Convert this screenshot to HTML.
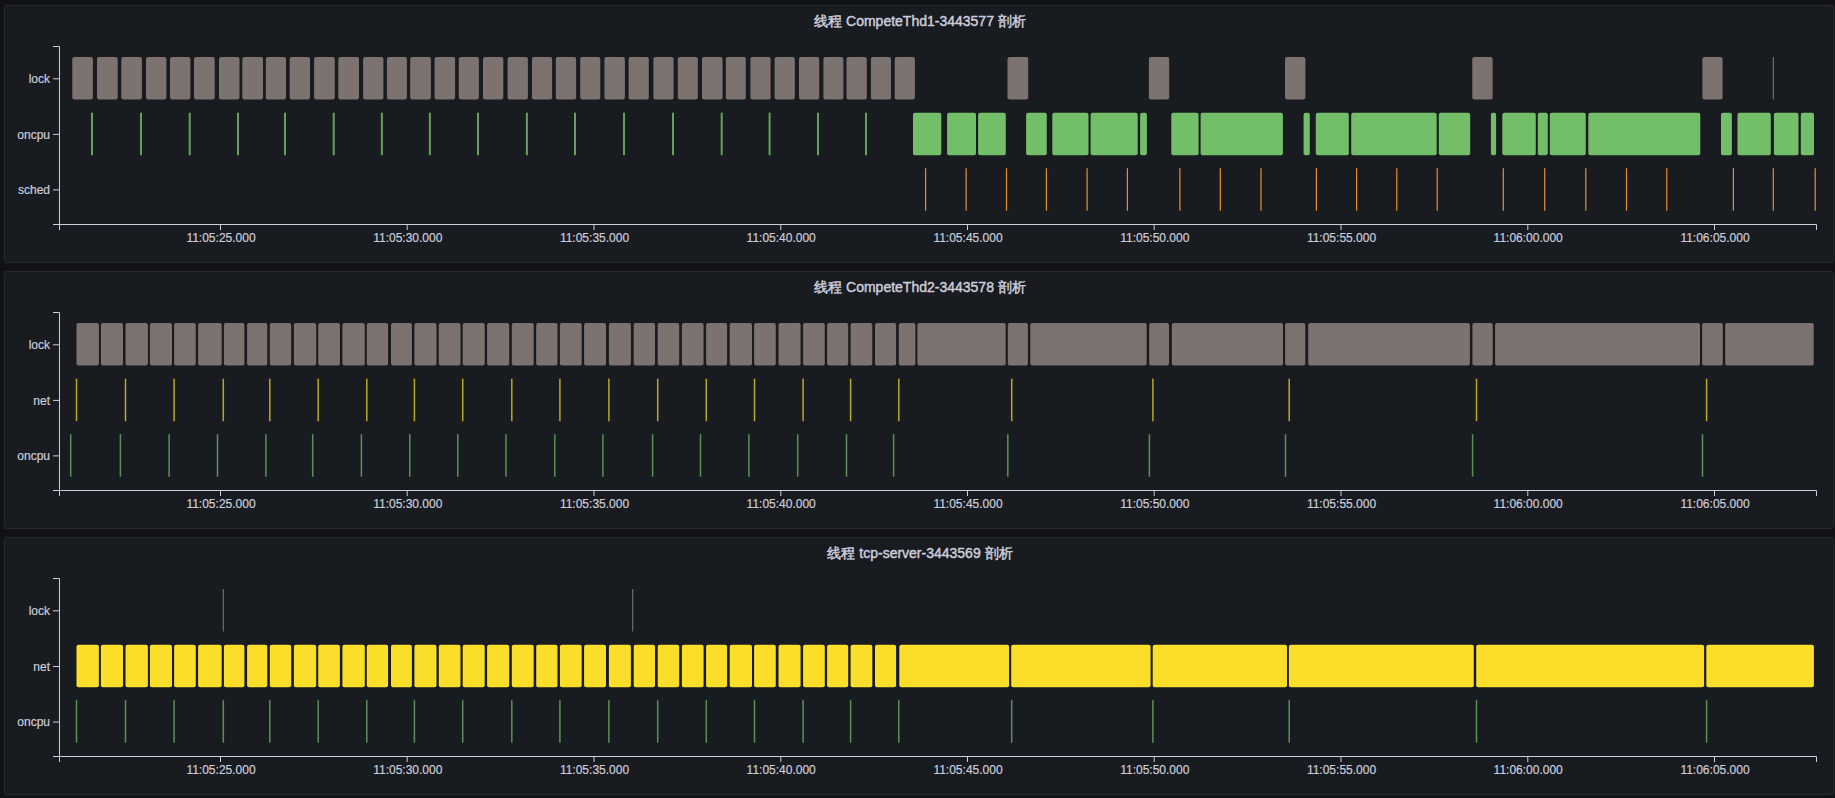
<!DOCTYPE html><html><head><meta charset="utf-8"><style>html,body{margin:0;padding:0;background:#111217;width:1835px;height:798px;overflow:hidden}svg{display:block}text{font-family:"Liberation Sans",sans-serif}</style></head><body>
<svg width="1835" height="798" viewBox="0 0 1835 798">
<rect x="4.5" y="5.5" width="1829" height="257" rx="2" fill="#181b1f" stroke="#26292f" stroke-width="1"/>
<text x="920" y="26" text-anchor="middle" font-size="14" fill="#ccccdc" stroke="#ccccdc" stroke-width="0.45">线程 CompeteThd1-3443577 剖析</text>
<path d="M53 46.5H59.5V230M53 224.5H1816.5V230" fill="none" stroke="#ccccdc" stroke-width="1"/>
<path d="M53 78.8H59" stroke="#ccccdc" stroke-width="1"/>
<text x="50" y="82.8" text-anchor="end" font-size="12" fill="#ccccdc" stroke="#ccccdc" stroke-width="0.2">lock</text>
<rect x="72.3" y="57.0" width="20.6" height="42.5" rx="2" fill="#7c7270"/>
<rect x="97.0" y="57.0" width="20.7" height="42.5" rx="2" fill="#7c7270"/>
<rect x="121.3" y="57.0" width="20.6" height="42.5" rx="2" fill="#7c7270"/>
<rect x="146.0" y="57.0" width="20.4" height="42.5" rx="2" fill="#7c7270"/>
<rect x="170.0" y="57.0" width="20.4" height="42.5" rx="2" fill="#7c7270"/>
<rect x="194.0" y="57.0" width="20.7" height="42.5" rx="2" fill="#7c7270"/>
<rect x="219.0" y="57.0" width="20.5" height="42.5" rx="2" fill="#7c7270"/>
<rect x="242.3" y="57.0" width="20.7" height="42.5" rx="2" fill="#7c7270"/>
<rect x="265.8" y="57.0" width="20.2" height="42.5" rx="2" fill="#7c7270"/>
<rect x="289.7" y="57.0" width="20.3" height="42.5" rx="2" fill="#7c7270"/>
<rect x="314.1" y="57.0" width="20.7" height="42.5" rx="2" fill="#7c7270"/>
<rect x="338.3" y="57.0" width="20.7" height="42.5" rx="2" fill="#7c7270"/>
<rect x="363.1" y="57.0" width="20.3" height="42.5" rx="2" fill="#7c7270"/>
<rect x="386.9" y="57.0" width="20.0" height="42.5" rx="2" fill="#7c7270"/>
<rect x="410.2" y="57.0" width="20.7" height="42.5" rx="2" fill="#7c7270"/>
<rect x="434.6" y="57.0" width="20.5" height="42.5" rx="2" fill="#7c7270"/>
<rect x="458.8" y="57.0" width="20.1" height="42.5" rx="2" fill="#7c7270"/>
<rect x="483.0" y="57.0" width="20.3" height="42.5" rx="2" fill="#7c7270"/>
<rect x="507.6" y="57.0" width="20.3" height="42.5" rx="2" fill="#7c7270"/>
<rect x="532.0" y="57.0" width="20.1" height="42.5" rx="2" fill="#7c7270"/>
<rect x="555.8" y="57.0" width="20.3" height="42.5" rx="2" fill="#7c7270"/>
<rect x="580.2" y="57.0" width="20.1" height="42.5" rx="2" fill="#7c7270"/>
<rect x="604.4" y="57.0" width="20.5" height="42.5" rx="2" fill="#7c7270"/>
<rect x="628.6" y="57.0" width="20.2" height="42.5" rx="2" fill="#7c7270"/>
<rect x="653.4" y="57.0" width="20.2" height="42.5" rx="2" fill="#7c7270"/>
<rect x="677.8" y="57.0" width="20.0" height="42.5" rx="2" fill="#7c7270"/>
<rect x="702.0" y="57.0" width="20.6" height="42.5" rx="2" fill="#7c7270"/>
<rect x="725.8" y="57.0" width="20.0" height="42.5" rx="2" fill="#7c7270"/>
<rect x="750.4" y="57.0" width="20.2" height="42.5" rx="2" fill="#7c7270"/>
<rect x="774.6" y="57.0" width="20.2" height="42.5" rx="2" fill="#7c7270"/>
<rect x="799.0" y="57.0" width="20.2" height="42.5" rx="2" fill="#7c7270"/>
<rect x="823.4" y="57.0" width="20.0" height="42.5" rx="2" fill="#7c7270"/>
<rect x="846.5" y="57.0" width="20.3" height="42.5" rx="2" fill="#7c7270"/>
<rect x="870.9" y="57.0" width="20.1" height="42.5" rx="2" fill="#7c7270"/>
<rect x="894.7" y="57.0" width="20.2" height="42.5" rx="2" fill="#7c7270"/>
<rect x="1007.5" y="57.0" width="20.7" height="42.5" rx="2" fill="#7c7270"/>
<rect x="1148.9" y="57.0" width="20.3" height="42.5" rx="2" fill="#7c7270"/>
<rect x="1285.0" y="57.0" width="20.4" height="42.5" rx="2" fill="#7c7270"/>
<rect x="1472.3" y="57.0" width="20.3" height="42.5" rx="2" fill="#7c7270"/>
<rect x="1702.4" y="57.0" width="20.2" height="42.5" rx="2" fill="#7c7270"/>
<rect x="1772.70" y="57.0" width="1.20" height="42.5" fill="#7c7270" fill-opacity="0.92"/>
<path d="M53 134.4H59" stroke="#ccccdc" stroke-width="1"/>
<text x="50" y="138.5" text-anchor="end" font-size="12" fill="#ccccdc" stroke="#ccccdc" stroke-width="0.2">oncpu</text>
<rect x="913.0" y="112.7" width="28.3" height="42.5" rx="2" fill="#73bf69"/>
<rect x="947.1" y="112.7" width="28.9" height="42.5" rx="2" fill="#73bf69"/>
<rect x="978.1" y="112.7" width="27.7" height="42.5" rx="2" fill="#73bf69"/>
<rect x="1026.1" y="112.7" width="20.7" height="42.5" rx="2" fill="#73bf69"/>
<rect x="1052.3" y="112.7" width="36.2" height="42.5" rx="2" fill="#73bf69"/>
<rect x="1090.6" y="112.7" width="47.1" height="42.5" rx="2" fill="#73bf69"/>
<rect x="1140.1" y="112.7" width="6.8" height="42.5" rx="2" fill="#73bf69"/>
<rect x="1171.3" y="112.7" width="27.3" height="42.5" rx="2" fill="#73bf69"/>
<rect x="1200.6" y="112.7" width="82.3" height="42.5" rx="2" fill="#73bf69"/>
<rect x="1303.6" y="112.7" width="6.2" height="42.5" rx="2" fill="#73bf69"/>
<rect x="1315.8" y="112.7" width="33.0" height="42.5" rx="2" fill="#73bf69"/>
<rect x="1351.2" y="112.7" width="85.5" height="42.5" rx="2" fill="#73bf69"/>
<rect x="1438.8" y="112.7" width="31.4" height="42.5" rx="2" fill="#73bf69"/>
<rect x="1490.9" y="112.7" width="5.2" height="42.5" rx="2" fill="#73bf69"/>
<rect x="1502.3" y="112.7" width="33.5" height="42.5" rx="2" fill="#73bf69"/>
<rect x="1537.8" y="112.7" width="10.0" height="42.5" rx="2" fill="#73bf69"/>
<rect x="1549.8" y="112.7" width="36.0" height="42.5" rx="2" fill="#73bf69"/>
<rect x="1588.3" y="112.7" width="112.0" height="42.5" rx="2" fill="#73bf69"/>
<rect x="1721.0" y="112.7" width="10.9" height="42.5" rx="2" fill="#73bf69"/>
<rect x="1737.5" y="112.7" width="33.3" height="42.5" rx="2" fill="#73bf69"/>
<rect x="1773.9" y="112.7" width="24.6" height="42.5" rx="2" fill="#73bf69"/>
<rect x="1800.8" y="112.7" width="13.2" height="42.5" rx="2" fill="#73bf69"/>
<rect x="91.00" y="112.7" width="2.00" height="42.5" fill="#73bf69" fill-opacity="0.82"/>
<rect x="140.00" y="112.7" width="2.00" height="42.5" fill="#73bf69" fill-opacity="0.82"/>
<rect x="188.70" y="112.7" width="2.00" height="42.5" fill="#73bf69" fill-opacity="0.82"/>
<rect x="237.00" y="112.7" width="2.00" height="42.5" fill="#73bf69" fill-opacity="0.82"/>
<rect x="284.00" y="112.7" width="2.00" height="42.5" fill="#73bf69" fill-opacity="0.82"/>
<rect x="332.70" y="112.7" width="2.00" height="42.5" fill="#73bf69" fill-opacity="0.82"/>
<rect x="380.90" y="112.7" width="2.00" height="42.5" fill="#73bf69" fill-opacity="0.82"/>
<rect x="428.90" y="112.7" width="2.00" height="42.5" fill="#73bf69" fill-opacity="0.82"/>
<rect x="477.00" y="112.7" width="2.00" height="42.5" fill="#73bf69" fill-opacity="0.82"/>
<rect x="525.90" y="112.7" width="2.00" height="42.5" fill="#73bf69" fill-opacity="0.82"/>
<rect x="574.00" y="112.7" width="2.00" height="42.5" fill="#73bf69" fill-opacity="0.82"/>
<rect x="623.00" y="112.7" width="2.00" height="42.5" fill="#73bf69" fill-opacity="0.82"/>
<rect x="672.00" y="112.7" width="2.00" height="42.5" fill="#73bf69" fill-opacity="0.82"/>
<rect x="720.70" y="112.7" width="2.00" height="42.5" fill="#73bf69" fill-opacity="0.82"/>
<rect x="768.60" y="112.7" width="2.00" height="42.5" fill="#73bf69" fill-opacity="0.82"/>
<rect x="817.00" y="112.7" width="2.00" height="42.5" fill="#73bf69" fill-opacity="0.82"/>
<rect x="865.00" y="112.7" width="2.00" height="42.5" fill="#73bf69" fill-opacity="0.82"/>
<path d="M53 189.9H59" stroke="#ccccdc" stroke-width="1"/>
<text x="50" y="194.0" text-anchor="end" font-size="12" fill="#ccccdc" stroke="#ccccdc" stroke-width="0.2">sched</text>
<rect x="925.00" y="168.2" width="1.20" height="42.5" fill="#ff9830" fill-opacity="0.92"/>
<rect x="965.50" y="168.2" width="1.20" height="42.5" fill="#ff9830" fill-opacity="0.92"/>
<rect x="1005.90" y="168.2" width="1.20" height="42.5" fill="#ff9830" fill-opacity="0.92"/>
<rect x="1045.80" y="168.2" width="1.20" height="42.5" fill="#ff9830" fill-opacity="0.92"/>
<rect x="1086.50" y="168.2" width="1.20" height="42.5" fill="#ff9830" fill-opacity="0.92"/>
<rect x="1126.80" y="168.2" width="1.20" height="42.5" fill="#ff9830" fill-opacity="0.92"/>
<rect x="1179.30" y="168.2" width="1.20" height="42.5" fill="#ff9830" fill-opacity="0.92"/>
<rect x="1219.70" y="168.2" width="1.20" height="42.5" fill="#ff9830" fill-opacity="0.92"/>
<rect x="1260.40" y="168.2" width="1.20" height="42.5" fill="#ff9830" fill-opacity="0.92"/>
<rect x="1315.80" y="168.2" width="1.20" height="42.5" fill="#ff9830" fill-opacity="0.92"/>
<rect x="1356.00" y="168.2" width="1.20" height="42.5" fill="#ff9830" fill-opacity="0.92"/>
<rect x="1396.20" y="168.2" width="1.20" height="42.5" fill="#ff9830" fill-opacity="0.92"/>
<rect x="1436.60" y="168.2" width="1.20" height="42.5" fill="#ff9830" fill-opacity="0.92"/>
<rect x="1502.70" y="168.2" width="1.20" height="42.5" fill="#ff9830" fill-opacity="0.92"/>
<rect x="1544.10" y="168.2" width="1.20" height="42.5" fill="#ff9830" fill-opacity="0.92"/>
<rect x="1585.20" y="168.2" width="1.20" height="42.5" fill="#ff9830" fill-opacity="0.92"/>
<rect x="1625.90" y="168.2" width="1.20" height="42.5" fill="#ff9830" fill-opacity="0.92"/>
<rect x="1666.20" y="168.2" width="1.20" height="42.5" fill="#ff9830" fill-opacity="0.92"/>
<rect x="1732.80" y="168.2" width="1.20" height="42.5" fill="#ff9830" fill-opacity="0.92"/>
<rect x="1772.70" y="168.2" width="1.20" height="42.5" fill="#ff9830" fill-opacity="0.92"/>
<rect x="1814.60" y="168.2" width="1.20" height="42.5" fill="#ff9830" fill-opacity="0.92"/>
<path d="M220.5 224V230" stroke="#ccccdc" stroke-width="1"/>
<text x="221.0" y="242" text-anchor="middle" font-size="12" fill="#ccccdc" stroke="#ccccdc" stroke-width="0.2">11:05:25.000</text>
<path d="M407.2 224V230" stroke="#ccccdc" stroke-width="1"/>
<text x="407.8" y="242" text-anchor="middle" font-size="12" fill="#ccccdc" stroke="#ccccdc" stroke-width="0.2">11:05:30.000</text>
<path d="M594.0 224V230" stroke="#ccccdc" stroke-width="1"/>
<text x="594.5" y="242" text-anchor="middle" font-size="12" fill="#ccccdc" stroke="#ccccdc" stroke-width="0.2">11:05:35.000</text>
<path d="M780.8 224V230" stroke="#ccccdc" stroke-width="1"/>
<text x="781.2" y="242" text-anchor="middle" font-size="12" fill="#ccccdc" stroke="#ccccdc" stroke-width="0.2">11:05:40.000</text>
<path d="M967.5 224V230" stroke="#ccccdc" stroke-width="1"/>
<text x="968.0" y="242" text-anchor="middle" font-size="12" fill="#ccccdc" stroke="#ccccdc" stroke-width="0.2">11:05:45.000</text>
<path d="M1154.2 224V230" stroke="#ccccdc" stroke-width="1"/>
<text x="1154.8" y="242" text-anchor="middle" font-size="12" fill="#ccccdc" stroke="#ccccdc" stroke-width="0.2">11:05:50.000</text>
<path d="M1341.0 224V230" stroke="#ccccdc" stroke-width="1"/>
<text x="1341.5" y="242" text-anchor="middle" font-size="12" fill="#ccccdc" stroke="#ccccdc" stroke-width="0.2">11:05:55.000</text>
<path d="M1527.8 224V230" stroke="#ccccdc" stroke-width="1"/>
<text x="1528.2" y="242" text-anchor="middle" font-size="12" fill="#ccccdc" stroke="#ccccdc" stroke-width="0.2">11:06:00.000</text>
<path d="M1714.5 224V230" stroke="#ccccdc" stroke-width="1"/>
<text x="1715.0" y="242" text-anchor="middle" font-size="12" fill="#ccccdc" stroke="#ccccdc" stroke-width="0.2">11:06:05.000</text>
<rect x="4.5" y="271.5" width="1829" height="257" rx="2" fill="#181b1f" stroke="#26292f" stroke-width="1"/>
<text x="920" y="292" text-anchor="middle" font-size="14" fill="#ccccdc" stroke="#ccccdc" stroke-width="0.45">线程 CompeteThd2-3443578 剖析</text>
<path d="M53 312.5H59.5V496M53 490.5H1816.5V496" fill="none" stroke="#ccccdc" stroke-width="1"/>
<path d="M53 344.8H59" stroke="#ccccdc" stroke-width="1"/>
<text x="50" y="348.9" text-anchor="end" font-size="12" fill="#ccccdc" stroke="#ccccdc" stroke-width="0.2">lock</text>
<rect x="76.5" y="323.0" width="22.4" height="42.5" rx="2" fill="#7c7270"/>
<rect x="100.9" y="323.0" width="22.1" height="42.5" rx="2" fill="#7c7270"/>
<rect x="125.5" y="323.0" width="22.4" height="42.5" rx="2" fill="#7c7270"/>
<rect x="149.9" y="323.0" width="22.1" height="42.5" rx="2" fill="#7c7270"/>
<rect x="174.1" y="323.0" width="21.7" height="42.5" rx="2" fill="#7c7270"/>
<rect x="198.1" y="323.0" width="23.6" height="42.5" rx="2" fill="#7c7270"/>
<rect x="223.9" y="323.0" width="20.5" height="42.5" rx="2" fill="#7c7270"/>
<rect x="247.1" y="323.0" width="20.2" height="42.5" rx="2" fill="#7c7270"/>
<rect x="269.8" y="323.0" width="21.4" height="42.5" rx="2" fill="#7c7270"/>
<rect x="293.9" y="323.0" width="22.3" height="42.5" rx="2" fill="#7c7270"/>
<rect x="318.2" y="323.0" width="21.7" height="42.5" rx="2" fill="#7c7270"/>
<rect x="342.4" y="323.0" width="22.4" height="42.5" rx="2" fill="#7c7270"/>
<rect x="366.8" y="323.0" width="21.3" height="42.5" rx="2" fill="#7c7270"/>
<rect x="391.0" y="323.0" width="20.9" height="42.5" rx="2" fill="#7c7270"/>
<rect x="414.4" y="323.0" width="22.1" height="42.5" rx="2" fill="#7c7270"/>
<rect x="438.8" y="323.0" width="21.7" height="42.5" rx="2" fill="#7c7270"/>
<rect x="462.7" y="323.0" width="22.0" height="42.5" rx="2" fill="#7c7270"/>
<rect x="487.1" y="323.0" width="22.1" height="42.5" rx="2" fill="#7c7270"/>
<rect x="511.8" y="323.0" width="21.9" height="42.5" rx="2" fill="#7c7270"/>
<rect x="536.2" y="323.0" width="21.3" height="42.5" rx="2" fill="#7c7270"/>
<rect x="559.9" y="323.0" width="21.8" height="42.5" rx="2" fill="#7c7270"/>
<rect x="584.1" y="323.0" width="21.9" height="42.5" rx="2" fill="#7c7270"/>
<rect x="608.9" y="323.0" width="22.0" height="42.5" rx="2" fill="#7c7270"/>
<rect x="633.7" y="323.0" width="21.3" height="42.5" rx="2" fill="#7c7270"/>
<rect x="657.7" y="323.0" width="21.5" height="42.5" rx="2" fill="#7c7270"/>
<rect x="681.9" y="323.0" width="21.7" height="42.5" rx="2" fill="#7c7270"/>
<rect x="706.1" y="323.0" width="21.0" height="42.5" rx="2" fill="#7c7270"/>
<rect x="729.7" y="323.0" width="22.3" height="42.5" rx="2" fill="#7c7270"/>
<rect x="754.1" y="323.0" width="21.7" height="42.5" rx="2" fill="#7c7270"/>
<rect x="778.5" y="323.0" width="22.1" height="42.5" rx="2" fill="#7c7270"/>
<rect x="803.1" y="323.0" width="21.7" height="42.5" rx="2" fill="#7c7270"/>
<rect x="827.1" y="323.0" width="21.1" height="42.5" rx="2" fill="#7c7270"/>
<rect x="850.6" y="323.0" width="21.7" height="42.5" rx="2" fill="#7c7270"/>
<rect x="875.0" y="323.0" width="21.1" height="42.5" rx="2" fill="#7c7270"/>
<rect x="898.8" y="323.0" width="16.6" height="42.5" rx="2" fill="#7c7270"/>
<rect x="917.4" y="323.0" width="88.3" height="42.5" rx="2" fill="#7c7270"/>
<rect x="1007.8" y="323.0" width="20.1" height="42.5" rx="2" fill="#7c7270"/>
<rect x="1030.3" y="323.0" width="116.4" height="42.5" rx="2" fill="#7c7270"/>
<rect x="1149.2" y="323.0" width="19.8" height="42.5" rx="2" fill="#7c7270"/>
<rect x="1171.8" y="323.0" width="111.2" height="42.5" rx="2" fill="#7c7270"/>
<rect x="1285.1" y="323.0" width="20.2" height="42.5" rx="2" fill="#7c7270"/>
<rect x="1308.2" y="323.0" width="161.7" height="42.5" rx="2" fill="#7c7270"/>
<rect x="1472.4" y="323.0" width="20.3" height="42.5" rx="2" fill="#7c7270"/>
<rect x="1495.1" y="323.0" width="204.9" height="42.5" rx="2" fill="#7c7270"/>
<rect x="1702.1" y="323.0" width="20.7" height="42.5" rx="2" fill="#7c7270"/>
<rect x="1725.2" y="323.0" width="88.5" height="42.5" rx="2" fill="#7c7270"/>
<path d="M53 400.4H59" stroke="#ccccdc" stroke-width="1"/>
<text x="50" y="404.6" text-anchor="end" font-size="12" fill="#ccccdc" stroke="#ccccdc" stroke-width="0.2">net</text>
<rect x="75.75" y="378.7" width="1.50" height="42.5" fill="#fade2a" fill-opacity="0.72"/>
<rect x="124.75" y="378.7" width="1.50" height="42.5" fill="#fade2a" fill-opacity="0.72"/>
<rect x="173.35" y="378.7" width="1.50" height="42.5" fill="#fade2a" fill-opacity="0.72"/>
<rect x="222.55" y="378.7" width="1.50" height="42.5" fill="#fade2a" fill-opacity="0.72"/>
<rect x="269.05" y="378.7" width="1.50" height="42.5" fill="#fade2a" fill-opacity="0.72"/>
<rect x="317.45" y="378.7" width="1.50" height="42.5" fill="#fade2a" fill-opacity="0.72"/>
<rect x="366.05" y="378.7" width="1.50" height="42.5" fill="#fade2a" fill-opacity="0.72"/>
<rect x="413.65" y="378.7" width="1.50" height="42.5" fill="#fade2a" fill-opacity="0.72"/>
<rect x="461.95" y="378.7" width="1.50" height="42.5" fill="#fade2a" fill-opacity="0.72"/>
<rect x="511.05" y="378.7" width="1.50" height="42.5" fill="#fade2a" fill-opacity="0.72"/>
<rect x="559.15" y="378.7" width="1.50" height="42.5" fill="#fade2a" fill-opacity="0.72"/>
<rect x="608.15" y="378.7" width="1.50" height="42.5" fill="#fade2a" fill-opacity="0.72"/>
<rect x="656.95" y="378.7" width="1.50" height="42.5" fill="#fade2a" fill-opacity="0.72"/>
<rect x="705.55" y="378.7" width="1.50" height="42.5" fill="#fade2a" fill-opacity="0.72"/>
<rect x="753.75" y="378.7" width="1.50" height="42.5" fill="#fade2a" fill-opacity="0.72"/>
<rect x="802.35" y="378.7" width="1.50" height="42.5" fill="#fade2a" fill-opacity="0.72"/>
<rect x="849.85" y="378.7" width="1.50" height="42.5" fill="#fade2a" fill-opacity="0.72"/>
<rect x="898.05" y="378.7" width="1.50" height="42.5" fill="#fade2a" fill-opacity="0.72"/>
<rect x="1010.95" y="378.7" width="1.50" height="42.5" fill="#fade2a" fill-opacity="0.72"/>
<rect x="1152.15" y="378.7" width="1.50" height="42.5" fill="#fade2a" fill-opacity="0.72"/>
<rect x="1288.45" y="378.7" width="1.50" height="42.5" fill="#fade2a" fill-opacity="0.72"/>
<rect x="1475.75" y="378.7" width="1.50" height="42.5" fill="#fade2a" fill-opacity="0.72"/>
<rect x="1705.85" y="378.7" width="1.50" height="42.5" fill="#fade2a" fill-opacity="0.72"/>
<path d="M53 455.9H59" stroke="#ccccdc" stroke-width="1"/>
<text x="50" y="460.1" text-anchor="end" font-size="12" fill="#ccccdc" stroke="#ccccdc" stroke-width="0.2">oncpu</text>
<rect x="69.95" y="434.2" width="1.50" height="42.5" fill="#73bf69" fill-opacity="0.72"/>
<rect x="119.65" y="434.2" width="1.50" height="42.5" fill="#73bf69" fill-opacity="0.72"/>
<rect x="168.35" y="434.2" width="1.50" height="42.5" fill="#73bf69" fill-opacity="0.72"/>
<rect x="216.75" y="434.2" width="1.50" height="42.5" fill="#73bf69" fill-opacity="0.72"/>
<rect x="265.15" y="434.2" width="1.50" height="42.5" fill="#73bf69" fill-opacity="0.72"/>
<rect x="311.95" y="434.2" width="1.50" height="42.5" fill="#73bf69" fill-opacity="0.72"/>
<rect x="360.65" y="434.2" width="1.50" height="42.5" fill="#73bf69" fill-opacity="0.72"/>
<rect x="409.05" y="434.2" width="1.50" height="42.5" fill="#73bf69" fill-opacity="0.72"/>
<rect x="457.05" y="434.2" width="1.50" height="42.5" fill="#73bf69" fill-opacity="0.72"/>
<rect x="505.25" y="434.2" width="1.50" height="42.5" fill="#73bf69" fill-opacity="0.72"/>
<rect x="554.05" y="434.2" width="1.50" height="42.5" fill="#73bf69" fill-opacity="0.72"/>
<rect x="602.15" y="434.2" width="1.50" height="42.5" fill="#73bf69" fill-opacity="0.72"/>
<rect x="651.85" y="434.2" width="1.50" height="42.5" fill="#73bf69" fill-opacity="0.72"/>
<rect x="699.75" y="434.2" width="1.50" height="42.5" fill="#73bf69" fill-opacity="0.72"/>
<rect x="748.15" y="434.2" width="1.50" height="42.5" fill="#73bf69" fill-opacity="0.72"/>
<rect x="796.95" y="434.2" width="1.50" height="42.5" fill="#73bf69" fill-opacity="0.72"/>
<rect x="845.75" y="434.2" width="1.50" height="42.5" fill="#73bf69" fill-opacity="0.72"/>
<rect x="892.85" y="434.2" width="1.50" height="42.5" fill="#73bf69" fill-opacity="0.72"/>
<rect x="1007.05" y="434.2" width="1.50" height="42.5" fill="#73bf69" fill-opacity="0.72"/>
<rect x="1148.65" y="434.2" width="1.50" height="42.5" fill="#73bf69" fill-opacity="0.72"/>
<rect x="1284.75" y="434.2" width="1.50" height="42.5" fill="#73bf69" fill-opacity="0.72"/>
<rect x="1471.85" y="434.2" width="1.50" height="42.5" fill="#73bf69" fill-opacity="0.72"/>
<rect x="1701.75" y="434.2" width="1.50" height="42.5" fill="#73bf69" fill-opacity="0.72"/>
<path d="M220.5 490V496" stroke="#ccccdc" stroke-width="1"/>
<text x="221.0" y="508" text-anchor="middle" font-size="12" fill="#ccccdc" stroke="#ccccdc" stroke-width="0.2">11:05:25.000</text>
<path d="M407.2 490V496" stroke="#ccccdc" stroke-width="1"/>
<text x="407.8" y="508" text-anchor="middle" font-size="12" fill="#ccccdc" stroke="#ccccdc" stroke-width="0.2">11:05:30.000</text>
<path d="M594.0 490V496" stroke="#ccccdc" stroke-width="1"/>
<text x="594.5" y="508" text-anchor="middle" font-size="12" fill="#ccccdc" stroke="#ccccdc" stroke-width="0.2">11:05:35.000</text>
<path d="M780.8 490V496" stroke="#ccccdc" stroke-width="1"/>
<text x="781.2" y="508" text-anchor="middle" font-size="12" fill="#ccccdc" stroke="#ccccdc" stroke-width="0.2">11:05:40.000</text>
<path d="M967.5 490V496" stroke="#ccccdc" stroke-width="1"/>
<text x="968.0" y="508" text-anchor="middle" font-size="12" fill="#ccccdc" stroke="#ccccdc" stroke-width="0.2">11:05:45.000</text>
<path d="M1154.2 490V496" stroke="#ccccdc" stroke-width="1"/>
<text x="1154.8" y="508" text-anchor="middle" font-size="12" fill="#ccccdc" stroke="#ccccdc" stroke-width="0.2">11:05:50.000</text>
<path d="M1341.0 490V496" stroke="#ccccdc" stroke-width="1"/>
<text x="1341.5" y="508" text-anchor="middle" font-size="12" fill="#ccccdc" stroke="#ccccdc" stroke-width="0.2">11:05:55.000</text>
<path d="M1527.8 490V496" stroke="#ccccdc" stroke-width="1"/>
<text x="1528.2" y="508" text-anchor="middle" font-size="12" fill="#ccccdc" stroke="#ccccdc" stroke-width="0.2">11:06:00.000</text>
<path d="M1714.5 490V496" stroke="#ccccdc" stroke-width="1"/>
<text x="1715.0" y="508" text-anchor="middle" font-size="12" fill="#ccccdc" stroke="#ccccdc" stroke-width="0.2">11:06:05.000</text>
<rect x="4.5" y="537.5" width="1829" height="257" rx="2" fill="#181b1f" stroke="#26292f" stroke-width="1"/>
<text x="920" y="558" text-anchor="middle" font-size="14" fill="#ccccdc" stroke="#ccccdc" stroke-width="0.45">线程 tcp-server-3443569 剖析</text>
<path d="M53 578.5H59.5V762M53 756.5H1816.5V762" fill="none" stroke="#ccccdc" stroke-width="1"/>
<path d="M53 610.8H59" stroke="#ccccdc" stroke-width="1"/>
<text x="50" y="614.9" text-anchor="end" font-size="12" fill="#ccccdc" stroke="#ccccdc" stroke-width="0.2">lock</text>
<rect x="222.70" y="589.0" width="1.20" height="42.5" fill="#7c7270" fill-opacity="0.92"/>
<rect x="632.10" y="589.0" width="1.20" height="42.5" fill="#7c7270" fill-opacity="0.92"/>
<path d="M53 666.5H59" stroke="#ccccdc" stroke-width="1"/>
<text x="50" y="670.6" text-anchor="end" font-size="12" fill="#ccccdc" stroke="#ccccdc" stroke-width="0.2">net</text>
<rect x="76.5" y="644.7" width="22.4" height="42.5" rx="2" fill="#fade2a"/>
<rect x="100.9" y="644.7" width="22.1" height="42.5" rx="2" fill="#fade2a"/>
<rect x="125.5" y="644.7" width="22.4" height="42.5" rx="2" fill="#fade2a"/>
<rect x="149.9" y="644.7" width="22.1" height="42.5" rx="2" fill="#fade2a"/>
<rect x="174.1" y="644.7" width="21.7" height="42.5" rx="2" fill="#fade2a"/>
<rect x="198.1" y="644.7" width="23.6" height="42.5" rx="2" fill="#fade2a"/>
<rect x="223.9" y="644.7" width="20.5" height="42.5" rx="2" fill="#fade2a"/>
<rect x="247.1" y="644.7" width="20.2" height="42.5" rx="2" fill="#fade2a"/>
<rect x="269.8" y="644.7" width="21.4" height="42.5" rx="2" fill="#fade2a"/>
<rect x="293.9" y="644.7" width="22.3" height="42.5" rx="2" fill="#fade2a"/>
<rect x="318.2" y="644.7" width="21.7" height="42.5" rx="2" fill="#fade2a"/>
<rect x="342.4" y="644.7" width="22.4" height="42.5" rx="2" fill="#fade2a"/>
<rect x="366.8" y="644.7" width="21.3" height="42.5" rx="2" fill="#fade2a"/>
<rect x="391.0" y="644.7" width="20.9" height="42.5" rx="2" fill="#fade2a"/>
<rect x="414.4" y="644.7" width="22.1" height="42.5" rx="2" fill="#fade2a"/>
<rect x="438.8" y="644.7" width="21.7" height="42.5" rx="2" fill="#fade2a"/>
<rect x="462.7" y="644.7" width="22.0" height="42.5" rx="2" fill="#fade2a"/>
<rect x="487.1" y="644.7" width="22.1" height="42.5" rx="2" fill="#fade2a"/>
<rect x="511.8" y="644.7" width="21.9" height="42.5" rx="2" fill="#fade2a"/>
<rect x="536.2" y="644.7" width="21.3" height="42.5" rx="2" fill="#fade2a"/>
<rect x="559.9" y="644.7" width="21.8" height="42.5" rx="2" fill="#fade2a"/>
<rect x="584.1" y="644.7" width="21.9" height="42.5" rx="2" fill="#fade2a"/>
<rect x="608.9" y="644.7" width="22.0" height="42.5" rx="2" fill="#fade2a"/>
<rect x="633.7" y="644.7" width="21.3" height="42.5" rx="2" fill="#fade2a"/>
<rect x="657.7" y="644.7" width="21.5" height="42.5" rx="2" fill="#fade2a"/>
<rect x="681.9" y="644.7" width="21.7" height="42.5" rx="2" fill="#fade2a"/>
<rect x="706.1" y="644.7" width="21.0" height="42.5" rx="2" fill="#fade2a"/>
<rect x="729.7" y="644.7" width="22.3" height="42.5" rx="2" fill="#fade2a"/>
<rect x="754.1" y="644.7" width="21.7" height="42.5" rx="2" fill="#fade2a"/>
<rect x="778.5" y="644.7" width="22.1" height="42.5" rx="2" fill="#fade2a"/>
<rect x="803.1" y="644.7" width="21.7" height="42.5" rx="2" fill="#fade2a"/>
<rect x="827.1" y="644.7" width="21.1" height="42.5" rx="2" fill="#fade2a"/>
<rect x="850.6" y="644.7" width="21.7" height="42.5" rx="2" fill="#fade2a"/>
<rect x="875.0" y="644.7" width="21.1" height="42.5" rx="2" fill="#fade2a"/>
<rect x="899.3" y="644.7" width="109.8" height="42.5" rx="2" fill="#fade2a"/>
<rect x="1011.2" y="644.7" width="139.4" height="42.5" rx="2" fill="#fade2a"/>
<rect x="1152.7" y="644.7" width="134.3" height="42.5" rx="2" fill="#fade2a"/>
<rect x="1288.9" y="644.7" width="184.9" height="42.5" rx="2" fill="#fade2a"/>
<rect x="1476.2" y="644.7" width="227.9" height="42.5" rx="2" fill="#fade2a"/>
<rect x="1706.3" y="644.7" width="107.6" height="42.5" rx="2" fill="#fade2a"/>
<path d="M53 722.0H59" stroke="#ccccdc" stroke-width="1"/>
<text x="50" y="726.1" text-anchor="end" font-size="12" fill="#ccccdc" stroke="#ccccdc" stroke-width="0.2">oncpu</text>
<rect x="75.75" y="700.2" width="1.50" height="42.5" fill="#73bf69" fill-opacity="0.72"/>
<rect x="124.75" y="700.2" width="1.50" height="42.5" fill="#73bf69" fill-opacity="0.72"/>
<rect x="173.35" y="700.2" width="1.50" height="42.5" fill="#73bf69" fill-opacity="0.72"/>
<rect x="222.55" y="700.2" width="1.50" height="42.5" fill="#73bf69" fill-opacity="0.72"/>
<rect x="269.05" y="700.2" width="1.50" height="42.5" fill="#73bf69" fill-opacity="0.72"/>
<rect x="317.45" y="700.2" width="1.50" height="42.5" fill="#73bf69" fill-opacity="0.72"/>
<rect x="366.05" y="700.2" width="1.50" height="42.5" fill="#73bf69" fill-opacity="0.72"/>
<rect x="413.65" y="700.2" width="1.50" height="42.5" fill="#73bf69" fill-opacity="0.72"/>
<rect x="461.95" y="700.2" width="1.50" height="42.5" fill="#73bf69" fill-opacity="0.72"/>
<rect x="511.05" y="700.2" width="1.50" height="42.5" fill="#73bf69" fill-opacity="0.72"/>
<rect x="559.15" y="700.2" width="1.50" height="42.5" fill="#73bf69" fill-opacity="0.72"/>
<rect x="608.15" y="700.2" width="1.50" height="42.5" fill="#73bf69" fill-opacity="0.72"/>
<rect x="656.95" y="700.2" width="1.50" height="42.5" fill="#73bf69" fill-opacity="0.72"/>
<rect x="705.55" y="700.2" width="1.50" height="42.5" fill="#73bf69" fill-opacity="0.72"/>
<rect x="753.75" y="700.2" width="1.50" height="42.5" fill="#73bf69" fill-opacity="0.72"/>
<rect x="802.35" y="700.2" width="1.50" height="42.5" fill="#73bf69" fill-opacity="0.72"/>
<rect x="849.85" y="700.2" width="1.50" height="42.5" fill="#73bf69" fill-opacity="0.72"/>
<rect x="898.05" y="700.2" width="1.50" height="42.5" fill="#73bf69" fill-opacity="0.72"/>
<rect x="1010.95" y="700.2" width="1.50" height="42.5" fill="#73bf69" fill-opacity="0.72"/>
<rect x="1152.15" y="700.2" width="1.50" height="42.5" fill="#73bf69" fill-opacity="0.72"/>
<rect x="1288.45" y="700.2" width="1.50" height="42.5" fill="#73bf69" fill-opacity="0.72"/>
<rect x="1475.75" y="700.2" width="1.50" height="42.5" fill="#73bf69" fill-opacity="0.72"/>
<rect x="1705.85" y="700.2" width="1.50" height="42.5" fill="#73bf69" fill-opacity="0.72"/>
<path d="M220.5 756V762" stroke="#ccccdc" stroke-width="1"/>
<text x="221.0" y="774" text-anchor="middle" font-size="12" fill="#ccccdc" stroke="#ccccdc" stroke-width="0.2">11:05:25.000</text>
<path d="M407.2 756V762" stroke="#ccccdc" stroke-width="1"/>
<text x="407.8" y="774" text-anchor="middle" font-size="12" fill="#ccccdc" stroke="#ccccdc" stroke-width="0.2">11:05:30.000</text>
<path d="M594.0 756V762" stroke="#ccccdc" stroke-width="1"/>
<text x="594.5" y="774" text-anchor="middle" font-size="12" fill="#ccccdc" stroke="#ccccdc" stroke-width="0.2">11:05:35.000</text>
<path d="M780.8 756V762" stroke="#ccccdc" stroke-width="1"/>
<text x="781.2" y="774" text-anchor="middle" font-size="12" fill="#ccccdc" stroke="#ccccdc" stroke-width="0.2">11:05:40.000</text>
<path d="M967.5 756V762" stroke="#ccccdc" stroke-width="1"/>
<text x="968.0" y="774" text-anchor="middle" font-size="12" fill="#ccccdc" stroke="#ccccdc" stroke-width="0.2">11:05:45.000</text>
<path d="M1154.2 756V762" stroke="#ccccdc" stroke-width="1"/>
<text x="1154.8" y="774" text-anchor="middle" font-size="12" fill="#ccccdc" stroke="#ccccdc" stroke-width="0.2">11:05:50.000</text>
<path d="M1341.0 756V762" stroke="#ccccdc" stroke-width="1"/>
<text x="1341.5" y="774" text-anchor="middle" font-size="12" fill="#ccccdc" stroke="#ccccdc" stroke-width="0.2">11:05:55.000</text>
<path d="M1527.8 756V762" stroke="#ccccdc" stroke-width="1"/>
<text x="1528.2" y="774" text-anchor="middle" font-size="12" fill="#ccccdc" stroke="#ccccdc" stroke-width="0.2">11:06:00.000</text>
<path d="M1714.5 756V762" stroke="#ccccdc" stroke-width="1"/>
<text x="1715.0" y="774" text-anchor="middle" font-size="12" fill="#ccccdc" stroke="#ccccdc" stroke-width="0.2">11:06:05.000</text>
</svg></body></html>
